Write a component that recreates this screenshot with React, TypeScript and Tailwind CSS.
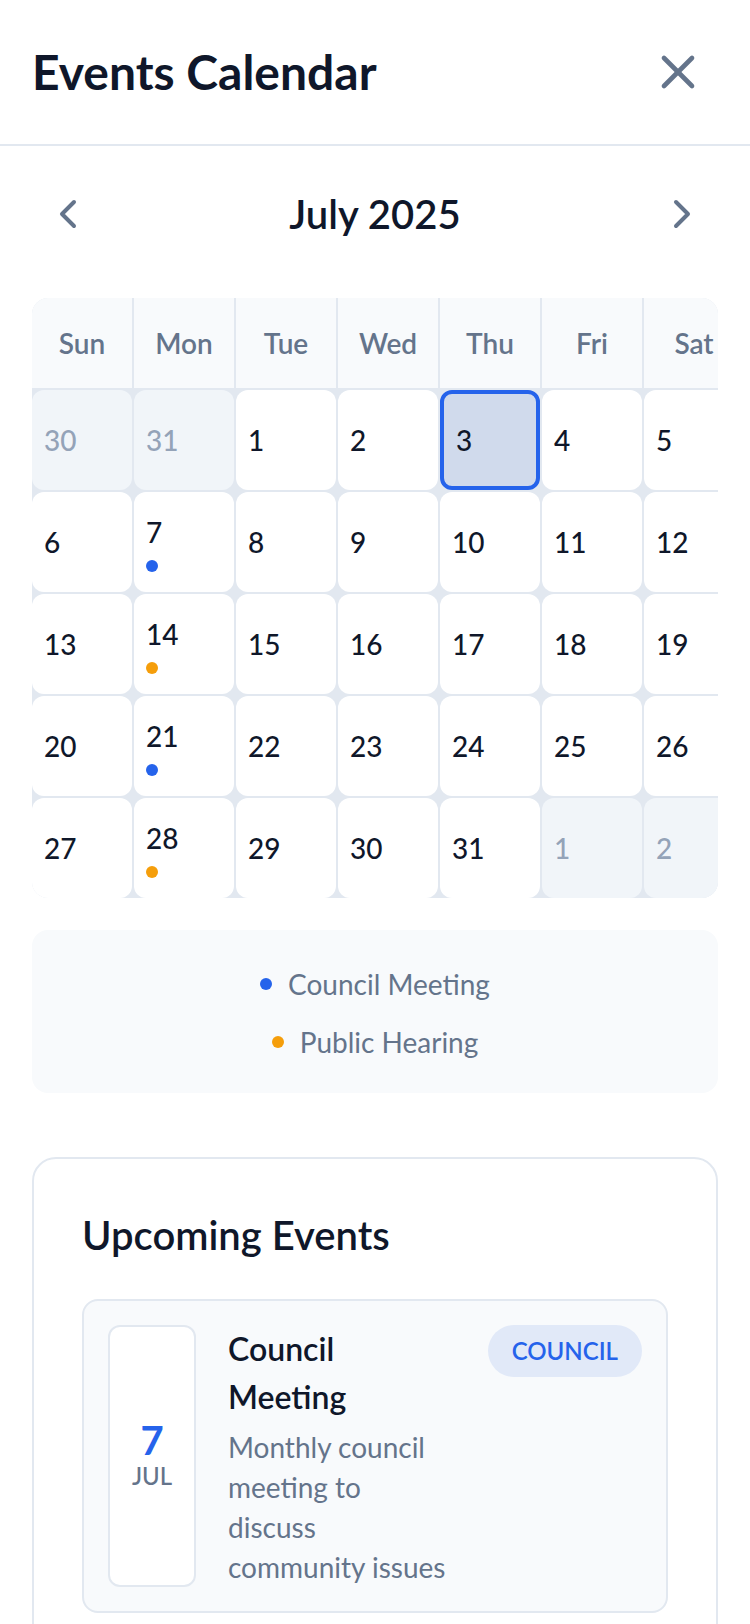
import { X, ChevronLeft, ChevronRight } from "lucide-react";

// events calendar panel, drawn at 2x scale

type Day = {
  n: number;
  muted?: boolean;
  selected?: boolean;
  dot?: "blue" | "orange";
};

const weekdays = ["Sun", "Mon", "Tue", "Wed", "Thu", "Fri", "Sat"];

const buildDays = (): Day[] => {
  const days: Day[] = [
    { n: 30, muted: true },
    { n: 31, muted: true },
  ];
  for (let i = 1; i <= 31; i++) {
    const day: Day = { n: i };
    if (i === 3) day.selected = true;
    if (i === 7 || i === 21) day.dot = "blue";
    if (i === 14 || i === 28) day.dot = "orange";
    days.push(day);
  }
  days.push({ n: 1, muted: true }, { n: 2, muted: true });
  return days;
};

const DayCell = ({ day }: { day: Day }) => {
  let cls =
    "h-[100px] rounded-xl flex flex-col justify-center items-start px-[12px] ";
  if (day.selected) cls += "bg-[#d0daec] border-4 border-[#2563eb]";
  else if (day.muted) cls += "bg-[#f1f5f9]";
  else cls += "bg-white";

  return (
    <div className={cls}>
      <span
        className={
          "text-[28px] leading-[40px] font-medium " +
          (day.muted ? "text-[#94a3b8]" : "text-[#0f172a]")
        }
      >
        {day.n}
      </span>
      {day.dot && (
        <span
          className={
            "mt-[8px] w-3 h-3 rounded-full " +
            (day.dot === "blue" ? "bg-[#2563eb]" : "bg-[#f59e0b]")
          }
        />
      )}
    </div>
  );
};

export default function App() {
  const days = buildDays();

  return (
    <div className="min-h-screen bg-white font-['Lato',sans-serif]">
      {/* header */}
      <div className="flex items-center justify-between px-8 py-10 border-b-2 border-[#e2e8f0]">
        <h1 className="text-[48px] leading-[64px] font-bold text-[#0f172a]">
          Events Calendar
        </h1>
        <button className="h-16 flex items-center mr-[12px] text-[#64748b]">
          <X size={56} strokeWidth={2} />
        </button>
      </div>

      <div className="px-8 pt-8">
        {/* month nav */}
        <div className="flex items-center justify-between">
          <button className="p-3 text-[#64748b]">
            <ChevronLeft size={48} strokeWidth={2} />
          </button>
          <h2 className="text-[40px] leading-[56px] font-semibold text-[#0f172a]">
            July 2025
          </h2>
          <button className="p-3 text-[#64748b]">
            <ChevronRight size={48} strokeWidth={2} />
          </button>
        </div>

        {/* calendar grid */}
        <div className="mt-12 rounded-2xl overflow-hidden bg-[#e2e8f0]">
          <div className="grid grid-cols-[repeat(7,100px)] gap-[2px] w-[712px]">
            {weekdays.map((w) => (
              <div
                key={w}
                className="bg-[#f8fafc] py-[25px] text-center text-[28px] leading-[40px] font-semibold text-[#64748b]"
              >
                {w}
              </div>
            ))}
            {days.map((d, i) => (
              <DayCell key={i} day={d} />
            ))}
          </div>
        </div>

        {/* legend */}
        <div className="mt-8 rounded-2xl bg-[#f8fafc] pt-[34px] pb-[31px] flex flex-col items-center gap-[18px]">
          <div className="flex items-center gap-4">
            <span className="w-3 h-3 rounded-full bg-[#2563eb]" />
            <span className="text-[28px] leading-[40px] text-[#64748b]">
              Council Meeting
            </span>
          </div>
          <div className="flex items-center gap-4">
            <span className="w-3 h-3 rounded-full bg-[#f59e0b]" />
            <span className="text-[28px] leading-[40px] text-[#64748b]">
              Public Hearing
            </span>
          </div>
        </div>

        {/* upcoming events */}
        <div className="mt-16 rounded-3xl border-2 border-[#e2e8f0] bg-white p-12">
          <h3 className="text-[40px] leading-[56px] font-semibold text-[#0f172a]">
            Upcoming Events
          </h3>
          <div className="mt-[36px] flex gap-8 rounded-2xl border-2 border-[#e2e8f0] bg-[#f8fafc] p-6">
            {/* date box */}
            <div className="w-[88px] shrink-0 rounded-xl border-2 border-[#e2e8f0] bg-white flex flex-col items-center justify-center">
              <span className="text-[40px] leading-[40px] font-bold text-[#2563eb]">
                7
              </span>
              <span className="text-[24px] leading-[32px] font-medium text-[#64748b]">
                JUL
              </span>
            </div>
            {/* text */}
            <div className="flex-1 min-w-0">
              <h4 className="text-[32px] leading-[48px] font-semibold text-[#0f172a]">
                Council Meeting
              </h4>
              <p className="mt-[6px] text-[28px] leading-[40px] text-[#64748b]">
                Monthly council meeting to discuss community issues
              </p>
            </div>
            {/* badge */}
            <div className="self-start shrink-0 rounded-full bg-[#e1e9f8] px-6 py-[10px] text-[24px] leading-[32px] font-semibold text-[#2563eb]">
              COUNCIL
            </div>
          </div>
        </div>
      </div>
    </div>
  );
}
